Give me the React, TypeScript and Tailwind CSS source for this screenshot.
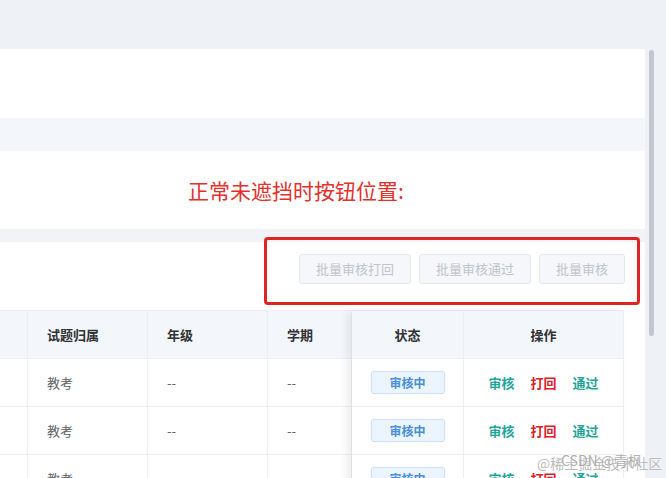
import React from 'react';

const rows = [
  { owner: '教考', grade: '--', term: '--' },
  { owner: '教考', grade: '--', term: '--' },
  { owner: '教考', grade: '--', term: '--' },
];

const HeadCell: React.FC<{ w: string; center?: boolean; children?: React.ReactNode }> = ({ w, center, children }) => (
  <div className={`${w} h-[48px] shrink-0 flex items-center border-r border-b border-[#ebeef5] text-[13px] font-bold text-[#303133] ${center ? 'justify-center' : 'pl-[19px]'}`}>
    {children}
  </div>
);

const BodyCell: React.FC<{ w: string; center?: boolean; children?: React.ReactNode }> = ({ w, center, children }) => (
  <div className={`${w} h-[48px] shrink-0 flex items-center border-r border-b border-[#ebeef5] text-[13px] text-[#606266] ${center ? 'justify-center' : 'pl-[19px]'}`}>
    {children}
  </div>
);

export default function App() {
  return (
    <div className="relative w-[666px] h-[478px] overflow-hidden bg-[#eef1f6] flex font-['Noto_Sans_CJK_SC','Noto_Sans',sans-serif]">
      {/* main column */}
      <div className="w-[645px] shrink-0 flex flex-col pt-[49px] overflow-hidden">
        <div className="h-[69px] shrink-0 bg-white" />
        <div className="h-[33px] shrink-0 bg-[#f3f6fa]" />
        <div className="h-[78px] shrink-0 bg-white flex items-center pl-[188px]">
          <span className="text-[21px] leading-none text-[#e3322d]">正常未遮挡时按钮位置:</span>
        </div>
        <div className="h-[13px] shrink-0 bg-[#f1f3f6]" />

        <div className="flex-1 shrink-0 bg-white flex flex-col">
          {/* toolbar */}
          <div className="h-[68px] shrink-0 flex items-start justify-end gap-2 pt-[12px] pr-[20px]">
            {['批量审核打回', '批量审核通过', '批量审核'].map(t => (
              <button key={t} className="h-[30px] px-4 rounded-[3px] border border-[#e4e7ed] bg-[#f5f7fa] text-[13px] text-[#c0c4cc]">
                {t}
              </button>
            ))}
          </div>

          {/* table */}
          <div className="flex shrink-0 w-[624px] border-t border-[#ebeef5]">
            <div className="flex flex-col w-[352px] overflow-hidden">
              <div className="flex bg-[#f3f6fb]">
                <HeadCell w="w-[28px]" />
                <HeadCell w="w-[120px]">试题归属</HeadCell>
                <HeadCell w="w-[120px]">年级</HeadCell>
                <HeadCell w="w-[84px]">学期</HeadCell>
              </div>
              {rows.map((r, i) => (
                <div key={i} className="flex">
                  <BodyCell w="w-[28px]" />
                  <BodyCell w="w-[120px]">{r.owner}</BodyCell>
                  <BodyCell w="w-[120px]">{r.grade}</BodyCell>
                  <BodyCell w="w-[84px]">{r.term}</BodyCell>
                </div>
              ))}
            </div>

            {/* fixed right columns */}
            <div className="flex flex-col w-[272px] bg-white shadow-[-5px_0_8px_rgba(0,0,0,0.07)] z-10">
              <div className="flex bg-[#f3f6fb]">
                <HeadCell w="w-[112px]" center>状态</HeadCell>
                <HeadCell w="w-[160px]" center>操作</HeadCell>
              </div>
              {rows.map((_, i) => (
                <div key={i} className="flex">
                  <BodyCell w="w-[112px]" center>
                    <span className="w-[74px] h-[23px] flex items-center justify-center rounded-[3px] border border-[#c6e2ff] bg-[#ecf5ff] text-[12px] font-semibold text-[#4a8fd9]">
                      审核中
                    </span>
                  </BodyCell>
                  <BodyCell w="w-[160px]" center>
                    <div className="flex gap-4 text-[13px] font-semibold">
                      <span className="text-[#1fa69a]">审核</span>
                      <span className="text-[#e2202a]">打回</span>
                      <span className="text-[#1fa69a]">通过</span>
                    </div>
                  </BodyCell>
                </div>
              ))}
            </div>
          </div>
        </div>
      </div>

      {/* right gutter with scrollbar */}
      <div className="flex-1 pt-[50px] pl-[4px]">
        <div className="w-[5px] h-[286px] rounded-full bg-[#c3c5cf]" />
      </div>

      {/* annotation box */}
      <div className="absolute z-20 left-[264px] top-[237px] w-[376px] h-[68px] border-[3px] border-[#e02424] rounded-[4px]" />

      {/* watermark */}
      <div className="absolute z-20 left-[537px] top-[456px] text-[14px] leading-none text-[#a8a8a8]/80 [text-shadow:0_0_2px_#fff]">
        @稀土掘金技术社区
      </div>
      <div className="absolute z-20 left-[561px] top-[453px] text-[14px] leading-none text-[#9a9a9a]/80 [text-shadow:0_0_2px_#fff]">
        CSDN @青枫
      </div>
    </div>
  );
}
